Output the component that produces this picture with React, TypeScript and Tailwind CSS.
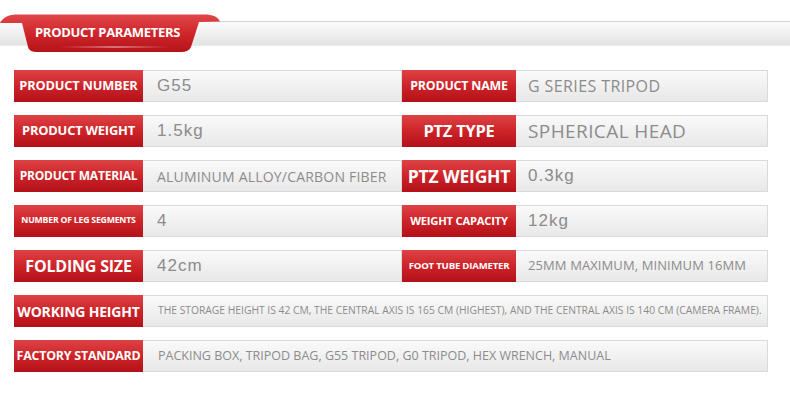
import React from "react";

type Cell = { label: string; lcls: string; value: string; vcls: string };

const NUM = "font-['Liberation_Sans',Arial,sans-serif] text-[17px] tracking-[1px]";
const SEG = "font-['Open_Sans',sans-serif]";

const rows: (Cell[])[] = [
  [
    { label: "PRODUCT NUMBER", lcls: "text-[12.8px]", value: "G55", vcls: NUM },
    { label: "PRODUCT NAME", lcls: "text-[12.4px]", value: "G SERIES TRIPOD", vcls: SEG + " text-[16px] tracking-[0.4px]" },
  ],
  [
    { label: "PRODUCT WEIGHT", lcls: "text-[12.9px]", value: "1.5kg", vcls: NUM },
    { label: "PTZ TYPE", lcls: "text-[16.4px]", value: "SPHERICAL HEAD", vcls: SEG + " text-[19px] tracking-[0.4px]" },
  ],
  [
    { label: "PRODUCT MATERIAL", lcls: "text-[12px]", value: "ALUMINUM ALLOY/CARBON FIBER", vcls: SEG + " text-[14px] tracking-[0.2px]" },
    { label: "PTZ WEIGHT", lcls: "text-[17.5px]", value: "0.3kg", vcls: NUM },
  ],
  [
    { label: "NUMBER OF LEG SEGMENTS", lcls: "text-[8.7px]", value: "4", vcls: NUM },
    { label: "WEIGHT CAPACITY", lcls: "text-[11.2px]", value: "12kg", vcls: NUM },
  ],
  [
    { label: "FOLDING SIZE", lcls: "text-[16px]", value: "42cm", vcls: NUM },
    { label: "FOOT TUBE DIAMETER", lcls: "text-[9.6px]", value: "25MM MAXIMUM, MINIMUM 16MM", vcls: SEG + " text-[13px] tracking-[0.1px]" },
  ],
  [
    {
      label: "WORKING HEIGHT",
      lcls: "text-[14px]",
      value: "THE STORAGE HEIGHT IS 42 CM, THE CENTRAL AXIS IS 165 CM (HIGHEST), AND THE CENTRAL AXIS IS 140 CM (CAMERA FRAME).",
      vcls: SEG + " text-[10.3px]",
    },
  ],
  [
    {
      label: "FACTORY STANDARD",
      lcls: "text-[12.4px]",
      value: "PACKING BOX, TRIPOD BAG, G55 TRIPOD, G0 TRIPOD, HEX WRENCH, MANUAL",
      vcls: SEG + " text-[12.5px]",
    },
  ],
];

function Label({ text, cls, w }: { text: string; cls: string; w: string }) {
  return (
    <div
      className={`${w} shrink-0 h-full flex items-center justify-center bg-gradient-to-b from-[#de4145] via-[#cd2328] to-[#b3101a] text-white font-bold font-['Open_Sans',sans-serif] whitespace-nowrap tracking-[-0.2px] ${cls}`}
    >
      {text}
    </div>
  );
}

function Value({ text, cls, w, pl }: { text: string; cls: string; w: string; pl: string }) {
  return (
    <div
      className={`${w} h-full flex items-center border border-l-0 border-[#dadada] bg-gradient-to-b from-[#fafafa] to-[#e8e8e8] text-[#8c8c8c] whitespace-nowrap overflow-hidden ${pl} ${cls}`}
    >
      {text}
    </div>
  );
}

export default function App() {
  return (
    <div className="w-[790px] h-[407px] bg-white overflow-hidden">
      <div className="relative h-[70px]">
        <div className="absolute left-0 right-0 top-[21px] h-[25px] border-t border-[#d2d2d2] border-b border-b-[#ececec] bg-gradient-to-b from-[#fbfbfb] to-[#e4e4e4]" />
        <svg className="absolute left-0 top-[12px]" width="224" height="44" viewBox="0 0 224 44">
          <defs>
            <linearGradient id="tabg" x1="0" y1="0" x2="0" y2="1">
              <stop offset="0" stopColor="#e0474a" />
              <stop offset="0.5" stopColor="#cf262b" />
              <stop offset="1" stopColor="#b5121a" />
            </linearGradient>
            <linearGradient id="hl" x1="0" y1="0" x2="1" y2="0">
              <stop offset="0" stopColor="#ffffff" stopOpacity="0" />
              <stop offset="0.5" stopColor="#ffffff" stopOpacity="0.8" />
              <stop offset="1" stopColor="#ffffff" stopOpacity="0" />
            </linearGradient>
          </defs>
          <path
            d="M0,11 C3,5 9,2.5 18,2.5 L204,2.5 C213,2.5 218,5 220,9.5 L199,10 L191,35 Q189,40 181,40 L37,40 Q29,40 28,35 L22,11 Z"
            fill="url(#tabg)"
          />
          <rect x="60" y="34.5" width="110" height="1" fill="url(#hl)" />
        </svg>
        <span className="absolute left-[35px] top-[22px] text-white font-bold font-['Open_Sans',sans-serif] text-[13px] tracking-[-0.3px] leading-[20px]">
          PRODUCT PARAMETERS
        </span>
      </div>
      <div className="ml-[14px] w-[754px] flex flex-col gap-[13px]">
        {rows.map((r, i) => (
          <div key={i} className="h-[32px] flex">
            {r.length === 2 ? (
              <>
                <Label text={r[0].label} cls={r[0].lcls} w="w-[129px]" />
                <Value text={r[0].value} cls={r[0].vcls} w="w-[259px]" pl="pl-[14px]" />
                <Label text={r[1].label} cls={r[1].lcls} w="w-[114px]" />
                <Value text={r[1].value} cls={r[1].vcls} w="w-[252px]" pl="pl-[12px]" />
              </>
            ) : (
              <>
                <Label text={r[0].label} cls={r[0].lcls} w="w-[129px]" />
                <Value text={r[0].value} cls={r[0].vcls} w="flex-1" pl="pl-[15px]" />
              </>
            )}
          </div>
        ))}
      </div>
    </div>
  );
}
